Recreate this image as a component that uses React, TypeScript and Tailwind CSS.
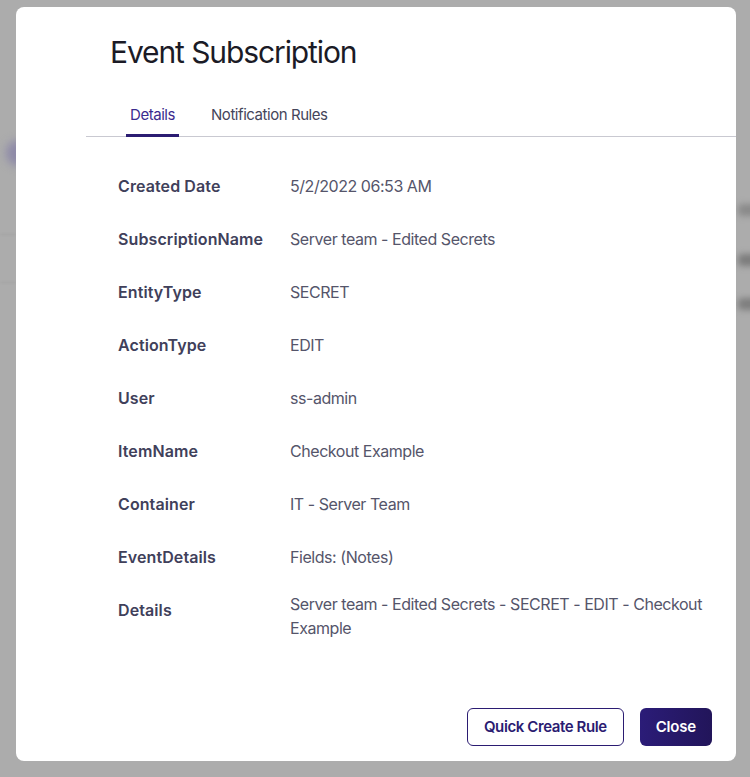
const rows: { label: string; value: string }[] = [
  { label: "Created Date", value: "5/2/2022 06:53 AM" },
  { label: "SubscriptionName", value: "Server team - Edited Secrets" },
  { label: "EntityType", value: "SECRET" },
  { label: "ActionType", value: "EDIT" },
  { label: "User", value: "ss-admin" },
  { label: "ItemName", value: "Checkout Example" },
  { label: "Container", value: "IT - Server Team" },
  { label: "EventDetails", value: "Fields: (Notes)" },
  {
    label: "Details",
    value: "Server team - Edited Secrets - SECRET - EDIT - Checkout Example",
  },
];

function Backdrop() {
  // blurred page content that sits behind the overlay
  return (
    <div className="pointer-events-none absolute inset-0 overflow-hidden">
      <div className="absolute left-[6px] top-[140px] h-[26px] w-[26px] rounded-full bg-[#8e8aa8] blur-[4px]" />
      <div className="absolute left-[738px] top-[204px] h-[12px] w-[30px] rounded bg-[#8a8a8a] blur-[3px]" />
      <div className="absolute left-[738px] top-[254px] h-[12px] w-[30px] rounded bg-[#7c7c7c] blur-[3px]" />
      <div className="absolute left-[738px] top-[298px] h-[12px] w-[30px] rounded bg-[#7e7e7e] blur-[3px]" />
      <div className="absolute left-0 top-[234px] h-px w-[16px] bg-[#a0a0a0] blur-[1px]" />
      <div className="absolute left-0 top-[282px] h-px w-[16px] bg-[#a0a0a0] blur-[1px]" />
    </div>
  );
}

export default function App() {
  return (
    <div
      className="relative h-[777px] w-[750px] overflow-hidden bg-[#acacac]"
      style={{ fontFamily: "Inter, 'Noto Sans', sans-serif" }}
    >
      <Backdrop />
      <div className="relative ml-[16px] mt-[7px] flex h-[754px] w-[720px] flex-col rounded-[8px] bg-white pt-[27px]">
        <h1 className="pl-[94px] text-[30px] leading-[36px] font-normal tracking-[-1.1px] text-[#1b1b26]">
          Event Subscription
        </h1>

        <div className="ml-[70px] mt-[33px] flex gap-[28px] border-b border-[#c9c9d1] pl-[40px]">
          <button className="-mb-px border-b-[3px] border-[#2b1c72] px-[4px] pb-[7px] text-[15px] leading-[24px] tracking-[-0.45px] text-[#3b2b8e]">
            Details
          </button>
          <button className="-mb-px border-b-[3px] border-transparent px-[4px] pb-[7px] text-[15px] leading-[24px] tracking-[-0.45px] text-[#45455a]">
            Notification Rules
          </button>
        </div>

        <div className="mt-[37px] grid grid-cols-[172px_1fr] gap-y-[29px] pl-[102px] pr-[18px]">
          {rows.map((r) => (
            <div key={r.label} className="col-span-2 grid grid-cols-subgrid">
              <div className="text-[16px] leading-[24px] font-semibold tracking-[0.1px] text-[#40405a]">
                {r.label}
              </div>
              <div
                className={`text-[16px] leading-[24px] tracking-[-0.45px] text-[#55556a] ${
                  r.label === "Details" ? "-mt-[6px]" : ""
                }`}
              >
                {r.value}
              </div>
            </div>
          ))}
        </div>

        <div className="mt-auto flex justify-end gap-[16px] pb-[15px] pr-[24px]">
          <button className="h-[38px] rounded-[6px] border border-[#2b1c72] bg-white px-[16px] text-[15px] font-semibold tracking-[-0.4px] text-[#2b1c72]">
            Quick Create Rule
          </button>
          <button className="h-[38px] rounded-[6px] bg-gradient-to-r from-[#2b1c78] to-[#22155a] px-[16px] text-[15px] font-semibold tracking-[-0.2px] text-white">
            Close
          </button>
        </div>
      </div>
    </div>
  );
}
